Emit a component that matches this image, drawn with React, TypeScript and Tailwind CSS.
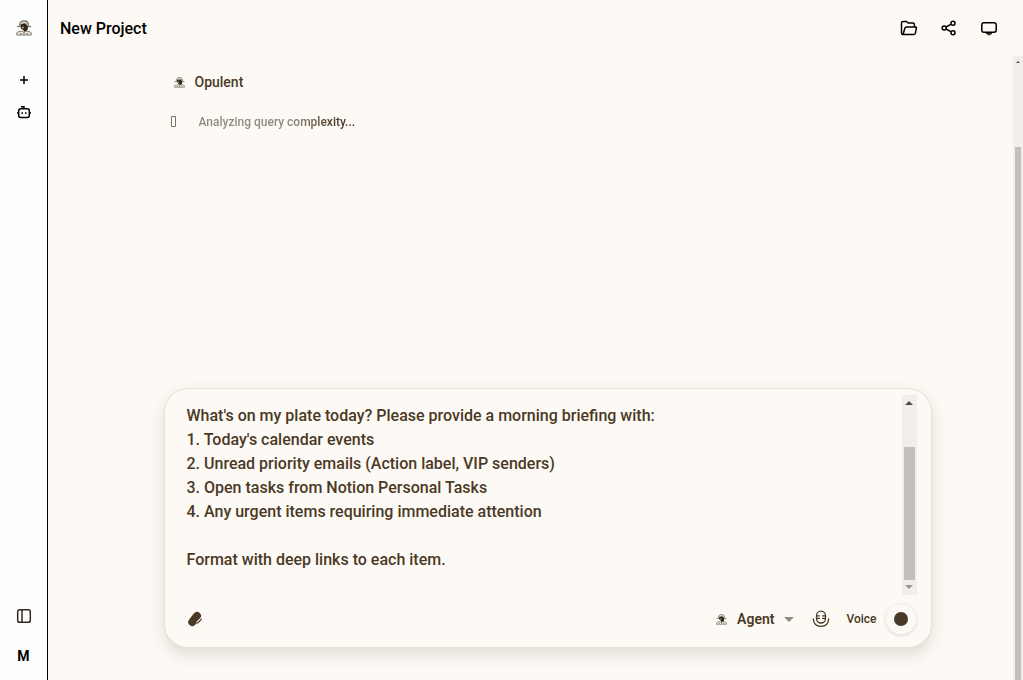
import { useState } from "react";

const briefing = `What's on my plate today? Please provide a morning briefing with:
1. Today's calendar events
2. Unread priority emails (Action label, VIP senders)
3. Open tasks from Notion Personal Tasks
4. Any urgent items requiring immediate attention

Format with deep links to each item.`;

const Mascot = ({ className }: { className: string }) => (
    <svg viewBox="0 0 16 16" className={className} fill="none" aria-hidden="true">
        <path d="M3.500 5.500C3.500 2 5.300.8 8 .8s4.500 1.200 4.500 4.700" stroke="#6f675c" strokeWidth="1.200" />
        <path d="M4.500 3.600c1-1.800 6-1.800 7 0l.6 2.200H3.900z" fill="#b9b0a4" />
        <path d="M.8 6.500h14.400" stroke="#857c70" strokeWidth="1.300" />
        <path d="M4.500 4.500 9 3.500l3 2.700-.5 3.800-2.500 2.300-2-2.300L5 8.500z" fill="#2e261d" />
        <path d="m5.800 7 2-.4L7.200 9.300z" fill="#d9c7b5" />
        <path d="M.8 15v-2.400c1.200-1 3.400-1.300 5-1.400L8 12.400l2.200-1.200c1.600.1 3.800.4 5 1.400V15z" fill="#ece7df" stroke="#7d7468" />
        <path d="M4 13.700h1.500M7.400 13.700h1.200M10.500 13.700H12" stroke="#5a5146" />
    </svg>
);

const RobotIcon = () => (
    <svg width="16" height="16" viewBox="0 0 16 16" fill="none" stroke="currentColor" strokeWidth="1.500" aria-hidden="true">
        <rect x="2.700" y="4.700" width="10.600" height="8.800" rx="2" />
        <path d="M8 4.500V2.700H5M1 9h1.500M13.500 9H15" />
        <path d="M6.200 8v2.200M9.800 8v2.200" strokeWidth="1.200" />
    </svg>
);

const FolderIcon = () => (
    <svg width="18" height="18" viewBox="0 0 18 18" fill="none" stroke="currentColor" strokeWidth="1.500" strokeLinejoin="round" aria-hidden="true">
        <path d="M3 15.500c-1 0-1.500-.6-1.500-1.600V4c0-1 .6-1.600 1.600-1.600h3.200L8.200 4h4.600c1 0 1.600.6 1.600 1.600v2.200" />
        <path d="M3 15.500h10.800c.8 0 1.300-.4 1.500-1.100l1.100-5.200c.2-.8-.1-1.300-.9-1.300H6.400c-.7 0-1.200.3-1.400 1L3 15.500z" />
    </svg>
);

const ShareIcon = () => (
    <svg width="18" height="18" viewBox="0 0 18 18" fill="none" stroke="currentColor" strokeWidth="1.500" aria-hidden="true">
        <circle cx="4.200" cy="9" r="2" />
        <circle cx="13" cy="4.200" r="2" />
        <circle cx="13" cy="13.800" r="2" />
        <path d="m6 8 5.200-2.800M6 10l5.200 2.800" />
    </svg>
);

const MonitorIcon = () => (
    <svg width="18" height="18" viewBox="0 0 18 18" fill="none" aria-hidden="true">
        <rect x="1.800" y="3.700" width="14.400" height="9.600" rx="2.200" stroke="currentColor" strokeWidth="1.500" />
        <path d="M6 14h6v1.200h-1.500v1h-3v-1H6z" fill="#3a2a1a" />
    </svg>
);

const PanelIcon = () => (
    <svg width="16" height="16" viewBox="0 0 16 16" fill="none" stroke="#33291d" strokeWidth="1.500" aria-hidden="true">
        <rect x="1.700" y="1.700" width="12.600" height="12.600" rx="1.800" />
        <path d="M6 2v12" />
    </svg>
);

const ClipIcon = () => (
    <svg width="16" height="16" viewBox="0 0 16 16" fill="none" strokeLinecap="round" aria-hidden="true">
        <path d="M5.300 11 10 5" stroke="#4a3926" strokeWidth="8" />
        <path d="m10.200 11.500 3.300-3.300" stroke="#fdf9f4" strokeWidth="2" />
        <path d="m9.500 12 1.600-.4 3.300-3.400" stroke="#4a3926" strokeWidth="1.200" />
    </svg>
);

const MicIcon = () => (
    <svg width="18" height="18" viewBox="0 0 18 18" fill="none" stroke="#4a3926" strokeWidth="1.300" strokeLinecap="round" aria-hidden="true">
        <rect x="4.500" y="1.200" width="9" height="11.800" rx="4.500" />
        <path d="M5.200 5.800h2.200M5.200 8.400h2.200M10.600 5.800h2.200M10.600 8.400h2.200" />
        <path d="M1.300 9c.3 4.700 3.400 7.300 7.700 7.300s7.400-2.600 7.700-7.300" />
    </svg>
);

const Sidebar = () => {
    return (
        <aside className="flex w-12 shrink-0 flex-col items-center border-r border-black bg-[#fdfffe] text-black">
            <a href="#home" aria-label="Home" className="mt-5"><Mascot className="size-4" /></a>
            <button aria-label="New project" className="mt-9 flex size-4 items-center justify-center">
                <svg width="8" height="8" viewBox="0 0 8 8" stroke="currentColor" strokeWidth="1.500"><path d="M4 0v8M0 4h8" /></svg>
            </button>
            <button aria-label="Agents" className="mt-4"><RobotIcon /></button>
            <button aria-label="Toggle sidebar" className="mt-auto"><PanelIcon /></button>
            <button className="mt-5 mb-3 text-sm leading-6 font-bold">M</button>
        </aside>
    );
};

const Composer = () => {
    const [text, setText] = useState(briefing);

    return (
        <form className="mx-auto flex w-full max-w-3xl flex-col rounded-3xl border border-b-2 border-[#e9e0d3] bg-[#fdf9f4] shadow-[0_6px_16px_rgba(60,50,40,0.14)]">
            <div className="mt-[6px] flex h-[200px] pr-[14px]">
                <textarea
                    aria-label="Message"
                    value={text}
                    onChange={(e) => setText(e.target.value)}
                    className="flex-1 resize-none overflow-hidden pt-[9px] pl-[22px] text-base leading-6 font-medium outline-none"
                />
                {/* scrollbar */}
                <div className="flex w-[15px] flex-col items-center bg-[#f0efed]" aria-hidden="true">
                    <svg width="8" height="4" viewBox="0 0 8 4" className="my-[6px]"><path d="M4 0 8 4H0z" fill="#5c4936" /></svg>
                    <div className="mt-9 w-[11px] flex-1 bg-[#c1c0be]" />
                    <svg width="8" height="4" viewBox="0 0 8 4" className="mt-[5px] mb-[6px]"><path d="M0 0h8L4 4z" fill="#a09488" /></svg>
                </div>
            </div>
            <div className="flex items-center pt-2 pr-[14px] pb-3 pl-[22px]">
                <button type="button" aria-label="Attach file"><ClipIcon /></button>
                <button type="button" className="ml-auto flex items-center text-sm font-semibold">
                    <Mascot className="mr-[10px] size-[11px]" />
                    Agent
                    <svg width="10" height="5" viewBox="0 0 10 5" className="ml-[10px]"><path d="M0 0h10L5 5z" fill="#938a7e" /></svg>
                </button>
                <button type="button" aria-label="Dictate" className="ml-[18px]"><MicIcon /></button>
                <button type="button" className="ml-4 text-xs font-medium">Voice</button>
                <button type="submit" aria-label="Send" className="ml-2 flex size-8 items-center justify-center rounded-full border border-[#f1ece4] shadow-sm">
                    <span className="size-[14px] rounded-full bg-[#4a3926]" />
                </button>
            </div>
        </form>
    );
};

const App = () => {
    return (
        <div className="flex h-screen overflow-hidden bg-[#fdf9f4] font-['Roboto',sans-serif] text-[#4a3926]">
            <Sidebar />
            <main className="flex min-w-0 flex-1 flex-col">
                <header className="flex h-14 shrink-0 items-center justify-between pr-[25px] pl-3 text-black">
                    <h1 className="pt-px text-base font-medium">New Project</h1>
                    <div className="flex gap-[22px]">
                        <button aria-label="Files"><FolderIcon /></button>
                        <button aria-label="Share"><ShareIcon /></button>
                        <button aria-label="Preview"><MonitorIcon /></button>
                    </div>
                </header>
                <div className="flex min-h-0 flex-1">
                    <div className="flex min-w-0 flex-1 flex-col pr-[14px] pb-[31px] pl-12">
                        <section className="mx-auto w-full max-w-3xl">
                            <div className="flex items-center gap-[10px] pt-4 pl-[10px] text-sm font-medium">
                                <Mascot className="size-[11px]" />
                                Opulent
                            </div>
                            <div className="mt-5 flex items-center pl-[7px] text-xs">
                                <svg width="6" height="12" viewBox="0 0 6 12" fill="none" stroke="#7b7166" className="mr-[22px]"><path d="M.5.5h4v10h-4z" /></svg>
                                <span className="bg-linear-to-r from-[#8f877b] from-60% to-[#4a3926] to-85% bg-clip-text leading-5 font-medium text-transparent">
                                    Analyzing query complexity...
                                </span>
                            </div>
                        </section>
                        <div className="mt-auto"><Composer /></div>
                    </div>
                    <div className="flex w-[10px] shrink-0 flex-col items-center bg-[#f0efed]" aria-hidden="true">
                        <svg width="4" height="2" viewBox="0 0 4 2" className="mt-[5px]"><path d="M2 0 4 2H0z" fill="#5c4936" /></svg>
                        <div className="mt-[84px] w-[6px] flex-1 bg-[#c1c0be]" />
                    </div>
                </div>
            </main>
        </div>
    );
};

export default App;
